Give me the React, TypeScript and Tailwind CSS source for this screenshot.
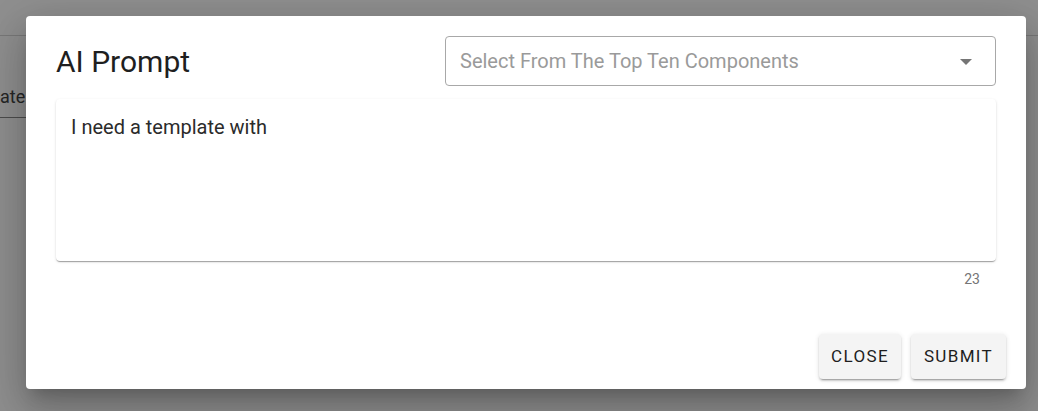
import { useState } from 'react'

export default function App() {
  const [prompt, setPrompt] = useState('I need a template with ')

  return (
    <div className="relative h-[411px] w-full overflow-hidden bg-white font-['Roboto',sans-serif]">
      {/* page behind the modal */}
      <div className="h-[36px] border-b border-[#d6d6d6]" />
      <div className="mt-[49px] w-[30px] border-b border-[#8a8a8a] pb-[8px] text-[18px] leading-6 text-[#444]">
        ate
      </div>

      {/* backdrop */}
      <div className="absolute inset-0 bg-black/[0.44]">
        <div className="ml-[26px] mt-[16px] flex h-[373px] w-[1000px] flex-col rounded bg-white px-[30px] pt-5 shadow-[0px_11px_15px_-7px_rgba(0,0,0,0.2),0px_24px_38px_3px_rgba(0,0,0,0.14),0px_9px_46px_8px_rgba(0,0,0,0.12)]">
          <div className="flex h-[50px] items-center justify-between">
            <h2 className="pt-[1px] text-[30px] leading-none text-[#1f1f1f]">AI Prompt</h2>
            <button className="flex h-[50px] w-[551px] items-center justify-between rounded border border-[#a8a8a8] pl-[14px] pr-[23px] text-left">
              <span className="text-[20px] text-[#9a9a9a]">Select From The Top Ten Components</span>
              <svg width="12" height="6" viewBox="0 0 12 6" className="mt-[1px]">
                <path d="M0 0 L12 0 L6 6 Z" fill="#757575" />
              </svg>
            </button>
          </div>

          <div className="mt-[13px] h-[162px] rounded bg-white px-[15px] pt-[16px] shadow-[0px_2px_1px_-1px_rgba(0,0,0,0.2),0px_1px_1px_0px_rgba(0,0,0,0.14),0px_1px_3px_0px_rgba(0,0,0,0.12)]">
            <textarea
              value={prompt}
              onChange={(e) => setPrompt(e.target.value)}
              className="h-full w-full resize-none bg-transparent text-[20px] leading-6 text-[#2b2b2b] outline-none"
            />
          </div>
          <div className="mt-[8px] pr-[16px] text-right text-[14px] leading-5 text-[#757575]">{prompt.length}</div>

          <div className="mr-[-10px] mt-auto mb-[10px] flex justify-end gap-[10px]">
            <button className="h-[45px] w-[82px] rounded bg-[#f4f4f4] text-[17px] font-normal tracking-[0.08em] text-[#1e1e1e] shadow-[0px_3px_1px_-2px_rgba(0,0,0,0.2),0px_2px_2px_0px_rgba(0,0,0,0.14),0px_1px_5px_0px_rgba(0,0,0,0.12)]">
              CLOSE
            </button>
            <button className="h-[45px] w-[95px] rounded bg-[#f4f4f4] text-[17px] font-normal tracking-[0.08em] text-[#1e1e1e] shadow-[0px_3px_1px_-2px_rgba(0,0,0,0.2),0px_2px_2px_0px_rgba(0,0,0,0.14),0px_1px_5px_0px_rgba(0,0,0,0.12)]">
              SUBMIT
            </button>
          </div>
        </div>
      </div>
    </div>
  )
}
